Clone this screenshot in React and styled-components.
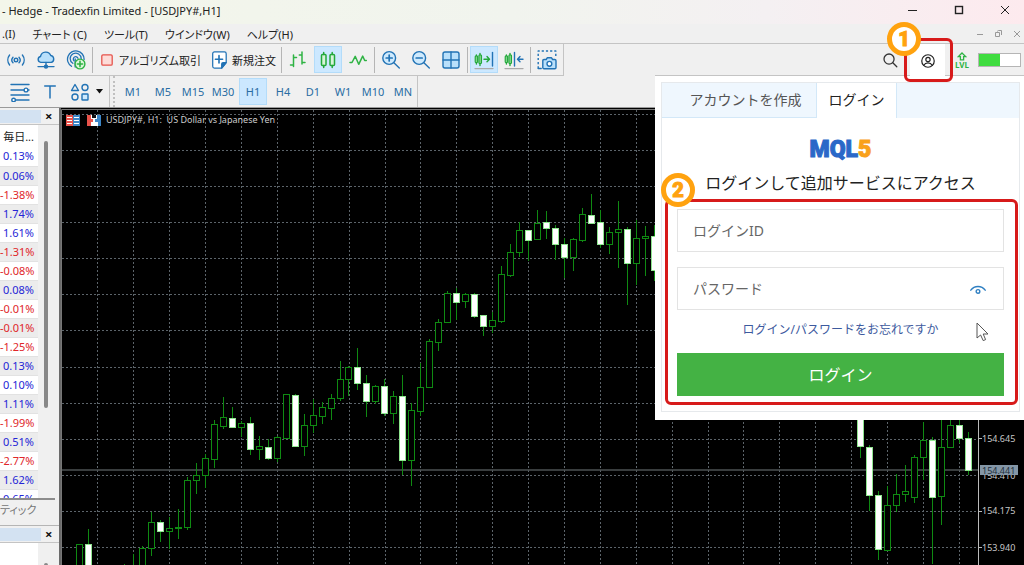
import React, { useState } from "react";
import styled, { createGlobalStyle, css } from "styled-components";

const GlobalStyle = createGlobalStyle`
  * {
    box-sizing: border-box;
  }
  body {
    margin: 0;
    overflow: hidden;
    font-family: "Noto Sans", "Noto Sans CJK JP", sans-serif;
    color: #222;
  }
  button, input {
    font-family: inherit;
  }
`;

// [x, high, body top, body bottom, low, filled]
const candles = [
  [79, 544, 544, 580, 580, 0],
  [88, 529, 544, 580, 580, 1],
  [124, 564, 570, 580, 580, 0],
  [133, 554, 570, 580, 580, 0],
  [142, 546, 548, 580, 580, 0],
  [151, 512, 522, 548, 556, 0],
  [160, 520, 522, 531, 542, 1],
  [169, 517, 528, 531, 549, 0],
  [178, 509, 527, 528, 539, 0],
  [187, 477, 480, 527, 530, 0],
  [196, 463, 475, 480, 494, 0],
  [205, 454, 458, 475, 488, 0],
  [214, 420, 424, 459, 468, 0],
  [223, 397, 417, 426, 429, 0],
  [232, 407, 418, 427, 428, 1],
  [241, 421, 423, 427, 437, 0],
  [250, 417, 423, 449, 455, 1],
  [259, 436, 446, 449, 460, 0],
  [268, 439, 447, 458, 460, 1],
  [277, 436, 437, 458, 462, 0],
  [286, 394, 394, 438, 438, 0],
  [295, 394, 395, 446, 447, 1],
  [304, 414, 425, 446, 456, 0],
  [313, 399, 415, 425, 433, 0],
  [322, 402, 407, 416, 424, 0],
  [331, 394, 398, 408, 420, 0],
  [340, 361, 379, 398, 401, 0],
  [348, 366, 367, 379, 396, 0],
  [357, 348, 367, 383, 390, 1],
  [366, 375, 383, 401, 417, 1],
  [375, 385, 386, 401, 404, 0],
  [384, 379, 386, 413, 416, 1],
  [393, 391, 396, 413, 424, 0],
  [402, 375, 396, 460, 475, 1],
  [411, 403, 410, 460, 486, 0],
  [420, 363, 387, 411, 416, 0],
  [429, 339, 341, 387, 388, 0],
  [438, 319, 322, 342, 351, 0],
  [447, 291, 293, 322, 323, 0],
  [456, 288, 293, 302, 320, 1],
  [465, 293, 294, 301, 308, 0],
  [474, 293, 294, 316, 318, 1],
  [483, 315, 315, 326, 336, 1],
  [492, 312, 320, 326, 333, 0],
  [501, 266, 274, 321, 323, 0],
  [510, 244, 252, 275, 277, 0],
  [519, 222, 230, 252, 257, 0],
  [528, 230, 230, 240, 261, 1],
  [537, 210, 223, 239, 240, 0],
  [546, 211, 222, 228, 239, 1],
  [555, 225, 228, 244, 260, 1],
  [564, 238, 244, 257, 278, 1],
  [573, 238, 239, 257, 271, 0],
  [582, 208, 214, 240, 242, 0],
  [591, 194, 215, 223, 224, 1],
  [600, 210, 222, 244, 248, 1],
  [609, 227, 232, 244, 254, 0],
  [618, 201, 229, 232, 268, 0],
  [627, 227, 229, 263, 305, 1],
  [636, 220, 238, 263, 285, 0],
  [645, 226, 236, 238, 276, 0],
  [654, 225, 236, 270, 281, 1],
  [860, 380, 390, 446, 458, 1],
  [869, 445, 447, 495, 511, 1],
  [878, 491, 495, 549, 560, 1],
  [887, 486, 505, 550, 551, 0],
  [896, 474, 494, 505, 512, 0],
  [905, 465, 491, 494, 502, 0],
  [914, 455, 457, 497, 503, 0],
  [923, 422, 440, 457, 480, 0],
  [932, 437, 440, 497, 564, 1],
  [941, 410, 447, 496, 525, 0],
  [950, 410, 425, 447, 448, 0],
  [959, 418, 425, 438, 443, 1],
  [968, 432, 438, 470, 475, 1],
];

const gridX = Array.from({ length: 25 }, (_, i) => Math.round(97.3 + i * 35.9));
const gridY = Array.from({ length: 13 }, (_, i) => Math.round(113.8 + i * 36.1));

const changes = [
  "0.13%",
  "0.06%",
  "-1.38%",
  "1.74%",
  "1.61%",
  "-1.31%",
  "-0.08%",
  "0.08%",
  "-0.01%",
  "-0.01%",
  "-1.25%",
  "0.13%",
  "0.10%",
  "1.11%",
  "-1.99%",
  "0.51%",
  "-2.77%",
  "1.62%",
  "0.65%",
];

const frames = ["M1", "M5", "M15", "M30", "H1", "H4", "D1", "W1", "M10", "MN"];

const Icon = ({ size = 20, children, ...rest }) => (
  <svg
    width={size}
    height={size}
    viewBox="0 0 20 20"
    fill="none"
    stroke="#2273b5"
    strokeWidth="1.4"
    strokeLinecap="round"
    strokeLinejoin="round"
    {...rest}
  >
    {children}
  </svg>
);

const SignalIcon = () => (
  <Icon>
    <circle cx="10" cy="10" r="1.8" />
    <path d="M7 7.200a4.200 4.200 0 0 0 0 5.600M13 7.200a4.200 4.200 0 0 1 0 5.600M3.600 5a8 8 0 0 0 0 10M16.400 5a8 8 0 0 1 0 10" />
  </Icon>
);

const CloudIcon = () => (
  <Icon>
    <path d="M4.8 12.4a3 3 0 0 1-.3-5.9 5.4 5.4 0 0 1 10.3-1 3.6 3.6 0 0 1 .6 6.9z" fill="#b9e0fb" />
    <path d="M10 12.4v3M2 16.6h6M12 16.6h6" />
    <circle cx="10" cy="16.6" r="1.5" fill="#2273b5" />
  </Icon>
);

const PodcastIcon = () => (
  <Icon>
    <path d="M5.5 16.3a8.3 8.3 0 1 1 12.6-6.9M6.8 13.3a5.5 5.5 0 1 1 8.4-4.5M8 10.8a2.4 2.4 0 1 1 4-2.4" strokeWidth="1.3" />
    <path d="M9.2 9v8" />
    <circle cx="14" cy="14" r="4.9" fill="#dcf6da" stroke="#2fb344" />
    <path d="M14 11.4v5.2M11.4 14h5.2" stroke="#2fb344" strokeWidth="1.6" />
  </Icon>
);

const StopIcon = () => (
  <Icon size={16}>
    <rect x="3.5" y="3.5" width="13" height="13" rx="1.5" fill="#fddcd8" stroke="#e5534b" strokeWidth="1.6" />
  </Icon>
);

const OrderIcon = () => (
  <Icon size={18}>
    <path d="M5 1h11a2 2 0 0 1 2 2v10l-5 6H5a2 2 0 0 1-2-2V3a2 2 0 0 1 2-2z" fill="#fff" />
    <path d="M18 13h-3.5a1.5 1.5 0 0 0-1.5 1.5V19z" fill="#2273b5" />
    <path d="M10 5.2v8M6 9.2h8" strokeWidth="1.8" />
  </Icon>
);

const BarsIcon = () => (
  <Icon stroke="#2fb344" strokeWidth="1.5">
    <path d="M5.5 5v11.5M5.5 7.5H8.5M2.5 15h3M14 2v12M11.3 5H14M14 12.5h3" />
  </Icon>
);

const CandlesIcon = () => (
  <Icon stroke="#22a83a" strokeWidth="1.5">
    <rect x="3.5" y="4.5" width="4.5" height="11" rx="1" fill="#d7f4d9" />
    <rect x="12" y="4.5" width="4.5" height="11" rx="1" fill="#d7f4d9" />
    <path d="M5.7 2.5v2M5.7 15.5v2M14.2 2.5v2M14.2 15.5v2" />
  </Icon>
);

const LineIcon = () => (
  <Icon stroke="#2fb344" strokeWidth="1.5">
    <path d="M2 12.5h2l3.2-6.2 3.5 8 4-8.2 2 4.4h1.6" />
  </Icon>
);

const ZoomIcon = ({ plus }) => (
  <Icon>
    <circle cx="8.2" cy="8" r="6.4" fill="#cfeafd" />
    <path d={plus ? "M5.2 8h6M8.2 5v6" : "M5.2 8h6"} strokeWidth="1.7" />
    <path d="M12.9 12.7l5.4 5.2" />
  </Icon>
);

const TilesIcon = () => (
  <Icon>
    <rect x="2" y="2" width="16" height="16" rx="2" fill="#b9e0fb" />
    <path d="M10 2v16M2 10h16" />
  </Icon>
);

const ScrollIcon = () => (
  <Icon>
    <path d="M2.4 5v9M6 3.5v12" stroke="#22a83a" />
    <rect x="1.2" y="6" width="2.4" height="6.5" rx=".8" fill="#7fd48a" stroke="#22a83a" strokeWidth="1.1" />
    <rect x="4.9" y="5" width="2.6" height="8.5" rx=".8" fill="#7fd48a" stroke="#22a83a" strokeWidth="1.1" />
    <path d="M10 9.2h5.4M13 6.6l2.5 2.6-2.5 2.6" stroke="#22a83a" />
    <path d="M18.5 2.5v13.5" />
    <path d="M1 18.6h18" stroke="#aaa" />
  </Icon>
);

const ShiftIcon = () => (
  <Icon>
    <path d="M2.4 5v9M6 3.5v12" stroke="#22a83a" />
    <rect x="1.2" y="6" width="2.4" height="6.5" rx=".8" fill="#7fd48a" stroke="#22a83a" strokeWidth="1.1" />
    <rect x="4.9" y="5" width="2.6" height="8.5" rx=".8" fill="#7fd48a" stroke="#22a83a" strokeWidth="1.1" />
    <path d="M10.5 2.5v13.5M19 9.2h-5.4M16 6.6l-2.5 2.6 2.5 2.6" />
    <path d="M1 18.6h18" stroke="#aaa" />
  </Icon>
);

const CameraIcon = () => (
  <Icon>
    <path d="M1.2 18.5V1h17.6v5" strokeDasharray="2.2 2" strokeLinecap="butt" />
    <path d="M1.2 18.5h3" />
    <path d="M7 9.5h2.2l1.2-1.8h4l1.2 1.8h2.2a1.2 1.2 0 0 1 1.2 1.2v6.8a1.2 1.2 0 0 1-1.2 1.2H7a1.2 1.2 0 0 1-1.2-1.2v-6.8A1.2 1.2 0 0 1 7 9.5z" fill="#b9e0fb" />
    <circle cx="12.4" cy="13.8" r="2.4" fill="#fff" />
  </Icon>
);

const LevelsIcon = () => (
  <Icon>
    <path d="M1 2.5h18M1 8h13M17.5 8H19M1 13h18M6 18h13" />
    <circle cx="16" cy="8" r="1.9" fill="#fff" />
    <circle cx="3.6" cy="18" r="1.8" fill="#fff" />
  </Icon>
);

const TextIcon = () => (
  <Icon strokeWidth="1.5">
    <path d="M4.2 4h11.6M10 4v12.5" strokeLinecap="butt" />
  </Icon>
);

const ShapesIcon = () => (
  <Icon>
    <path d="M5 2.5l3.5 6h-7z" />
    <circle cx="15" cy="5.5" r="3" />
    <circle cx="5" cy="15" r="3" />
    <rect x="12" y="12" width="6" height="6" rx=".6" fill="#cfeafd" />
  </Icon>
);

const SearchIcon = () => (
  <Icon size={16} stroke="#333" strokeWidth="1.6">
    <circle cx="8.8" cy="8.8" r="6.3" />
    <path d="M13.5 13.5l5 5" />
  </Icon>
);

const AccountIcon = () => (
  <Icon size={16} stroke="#222" strokeWidth="1.5">
    <circle cx="10" cy="10" r="7.800" />
    <circle cx="10" cy="8.200" r="2.700" />
    <path d="M4.800 15.400c1.200-2.200 3-3 5.200-3s4 .8 5.200 3" />
  </Icon>
);

const EyeIcon = () => (
  <Icon size={16} stroke="#2e7fc2" strokeWidth="1.7">
    <path d="M1 11.5c4.500-6.200 13.500-6.200 18 0" />
    <circle cx="10" cy="13" r="2.3" />
  </Icon>
);

const App = () => {
  const [frame, setFrame] = useState("H1");
  const [tab, setTab] = useState("login");
  const [visible, setVisible] = useState(false);
  return (
    <Terminal>
      <GlobalStyle />
      <TitleBar>
        <span>- Hedge - Tradexfin Limited - [USDJPY#,H1]</span>
        <WindowControls $color="#222" $gap={36}>
          <button aria-label="minimize">
            <svg width="10" height="10"><path d="M0 5.500h9" /></svg>
          </button>
          <button aria-label="maximize">
            <svg width="10" height="10"><rect x="1.500" y="1.500" width="7" height="7" strokeWidth="1.400" /></svg>
          </button>
          <button aria-label="close">
            <svg width="10" height="10"><path d="M1 1l8 8M9 1l-8 8" /></svg>
          </button>
        </WindowControls>
      </TitleBar>
      <MenuBar>
        <MenuList>
          <button>.(I)</button>
          <button>チャート (C)</button>
          <button>ツール(T)</button>
          <button>ウインドウ(W)</button>
          <button>ヘルプ(H)</button>
        </MenuList>
        <WindowControls $color="#999" $gap={8}>
          <button aria-label="minimize chart">
            <svg width="10" height="10"><path d="M1 5.500h6" /></svg>
          </button>
          <button aria-label="restore chart">
            <svg width="10" height="10"><path d="M3.500 2.500a1 1 0 0 1 1-1h3v4.500M1.500 3.500h4v4h-4z" /></svg>
          </button>
          <button aria-label="close chart">
            <svg width="10" height="10"><path d="M2 2l6 6M8 2l-6 6" /></svg>
          </button>
        </WindowControls>
      </MenuBar>
      <ToolRow>
        <ToolGroup>
          <ToolButton aria-label="signals"><SignalIcon /></ToolButton>
          <ToolButton aria-label="vps"><CloudIcon /></ToolButton>
          <ToolButton aria-label="add"><PodcastIcon /></ToolButton>
          <Separator />
          <LabelButton><StopIcon />アルゴリズム取引</LabelButton>
          <LabelButton><OrderIcon />新規注文</LabelButton>
          <Separator />
          <ToolButton aria-label="bars"><BarsIcon /></ToolButton>
          <ToolButton aria-label="candles" $active><CandlesIcon /></ToolButton>
          <ToolButton aria-label="line"><LineIcon /></ToolButton>
          <Separator />
          <ToolButton aria-label="zoom in"><ZoomIcon plus /></ToolButton>
          <ToolButton aria-label="zoom out"><ZoomIcon /></ToolButton>
          <ToolButton aria-label="tiles"><TilesIcon /></ToolButton>
          <Separator />
          <ToolButton aria-label="auto scroll" $active><ScrollIcon /></ToolButton>
          <ToolButton aria-label="shift"><ShiftIcon /></ToolButton>
          <Separator />
          <ToolButton aria-label="screenshot"><CameraIcon /></ToolButton>
        </ToolGroup>
        <StatusGroup>
          <ToolButton aria-label="search"><SearchIcon /></ToolButton>
          <AccountTab>
            <AccountButton aria-label="account"><AccountIcon /></AccountButton>
            <AccountMark><Badge>1</Badge></AccountMark>
          </AccountTab>
          <Level>
            <svg width="10" height="9" fill="none" stroke="#2fb344" strokeWidth="1.300">
              <path d="M5 1l3.600 3.600H6.600V7.800H3.400V4.600H1.400z" />
            </svg>
            LVL
          </Level>
          <Battery><i /></Battery>
        </StatusGroup>
        <Popup>
          <PopupFrame>
            <Tabs>
              <Tab $wide $on={tab === "create"} onClick={() => setTab("create")}>
                アカウントを作成
              </Tab>
              <Tab $on={tab === "login"} onClick={() => setTab("login")}>
                ログイン
              </Tab>
            </Tabs>
            <PopupBody>
              <Logo>MQL<b>5</b></Logo>
              <h1>ログインして追加サービスにアクセス</h1>
              <Form onSubmit={(e) => e.preventDefault()}>
                <Field>
                  <input type="text" placeholder="ログインID" aria-label="ログインID" />
                </Field>
                <Field>
                  <input
                    type={visible ? "text" : "password"}
                    placeholder="パスワード"
                    aria-label="パスワード"
                  />
                  <button
                    type="button"
                    aria-label="show password"
                    onClick={() => setVisible(!visible)}
                  >
                    <EyeIcon />
                  </button>
                </Field>
                <a href="#forgot">ログイン/パスワードをお忘れですか</a>
                <Submit type="submit">ログイン</Submit>
                <FormMark><Badge>2</Badge></FormMark>
                <Pointer width="14" height="20" viewBox="0 0 14 20">
                  <path d="M1 1v15l3.600-3 2.600 5.600 2.400-1L7.200 12H12z" fill="#fff" stroke="#555" />
                </Pointer>
              </Form>
            </PopupBody>
          </PopupFrame>
        </Popup>
      </ToolRow>
      <ToolRow $second>
        <FrameGroup>
          <ToolButton aria-label="levels"><LevelsIcon /></ToolButton>
          <ToolButton aria-label="text"><TextIcon /></ToolButton>
          <ToolButton aria-label="shapes"><ShapesIcon /></ToolButton>
          <svg width="8" height="5"><path d="M0 0h7L3.500 4.500z" fill="#111" /></svg>
          <Grip />
          {frames.map((name) => (
            <ToolButton key={name} $active={name === frame} onClick={() => setFrame(name)}>
              {name}
            </ToolButton>
          ))}
        </FrameGroup>
      </ToolRow>
      <Main>
        <Side>
          <PanelHead><i /><button aria-label="close watch">×</button></PanelHead>
          <Watch>
            <table>
              <thead>
                <tr><th scope="col">毎日...</th></tr>
              </thead>
              <tbody>
                {changes.map((value, i) => (
                  <Row key={i} $down={value[0] === "-"}>
                    <td>{value}</td>
                  </Row>
                ))}
              </tbody>
            </table>
            <Thumb />
          </Watch>
          <PanelTab>ティック</PanelTab>
          <PanelHead><i /><button aria-label="close navigator">×</button></PanelHead>
          <Navigator><Thumb /></Navigator>
        </Side>
        <Chart>
          <svg
            width="100%"
            height="100%"
            viewBox="61 109 963 456"
            preserveAspectRatio="xMinYMin slice"
          >
            <g stroke="#5c646a" strokeDasharray="2 2" shapeRendering="crispEdges">
              {gridX.map((x) => (
                <path key={x} d={`M${x + 0.5} 110V565`} />
              ))}
              {gridY.map((y) => (
                <path key={y} d={`M62 ${y + 0.5}H978`} />
              ))}
            </g>
            <path d="M61.500 565V109.500H1024" stroke="#777" fill="none" />
            <path d="M62 470H978" stroke="#4c5253" strokeWidth="1.500" />
            <g stroke="#0f8a12" shapeRendering="crispEdges">
              {candles.map(([x, high, top, bottom, low, filled]) => (
                <g key={x}>
                  <path d={`M${x + 0.5} ${high}V${low}`} />
                  <rect
                    x={x - 2.5}
                    y={top + 0.5}
                    width="6"
                    height={bottom - top}
                    fill={filled ? "#fff" : "#000"}
                    stroke={filled ? "#8fe58f" : "#0f8a12"}
                  />
                </g>
              ))}
            </g>
            <path d="M978.500 109V565M978 438.500h4M978 511.500h4M978 547.500h4" stroke="#bbb" />
            <Prices>
              <text x="982" y="442">154.645</text>
              <text x="982" y="479">154.410</text>
              <text x="982" y="514">154.175</text>
              <text x="982" y="551">153.940</text>
              <rect x="980" y="465" width="38" height="10" fill="#8496a6" />
              <text x="982" y="474" className="now">154.441</text>
            </Prices>
          </svg>
          <ChartTitle>
            <svg width="14" height="11">
              <path d="M0 0h7v11H0z" fill="#e8524a" />
              <path d="M7 0h7v11H7z" fill="#3d86c6" />
              <path d="M1 2.500h5M8 2.500h5M1 5.500h5M8 5.500h5M1 8.500h5M8 8.500h5" stroke="#fff" />
            </svg>
            <svg width="14" height="11">
              <path d="M0 0h14v11H0z" fill="#fff" />
              <path d="M0 0h4v4h2v3H4v4H0z" fill="#e8524a" />
              <path d="M10 0h4v11h-3V7H8V4h2z" fill="#3d86c6" />
              <path d="M5 0h4v3H5z" fill="#111" />
            </svg>
            <span>USDJPY#, H1:&nbsp; US Dollar vs Japanese Yen</span>
          </ChartTitle>
        </Chart>
      </Main>
    </Terminal>
  );
};

const plain = css`
  border: 0;
  padding: 0;
  background: none;
  color: inherit;
`;

const Terminal = styled.div`
  display: flex;
  flex-direction: column;
  height: 100vh;
  background: #f0f0f0;
  font-size: 11px;
  overflow: hidden;
`;

const TitleBar = styled.header`
  display: flex;
  align-items: center;
  justify-content: space-between;
  height: 24px;
  padding: 0 14px 4px 2px;
  background: linear-gradient(90deg, #f3f6ea, #f1f4ee 50%, #f4f0f2 75%, #fdeaee);
`;

const WindowControls = styled.div`
  display: flex;
  align-items: center;
  gap: ${({ $gap }) => $gap}px;
  button {
    ${plain}
    display: flex;
  }
  svg {
    fill: none;
    stroke: ${({ $color }) => $color};
  }
`;

const MenuBar = styled.div`
  display: flex;
  align-items: center;
  justify-content: space-between;
  height: 19px;
  padding: 0 2px;
`;

const MenuList = styled.nav`
  display: flex;
  gap: 17px;
  button {
    ${plain}
    font-size: 11px;
    font-feature-settings: "palt";
  }
`;

const ToolRow = styled.div`
  position: relative;
  display: flex;
  justify-content: space-between;
  height: ${({ $second }) => ($second ? 32 : 33)}px;
  border-top: ${({ $second }) => ($second ? 0 : "1px solid #c4c4c4")};
  border-bottom: ${({ $second }) => ($second ? "1px solid #9a9a9a" : 0)};
`;

const ToolGroup = styled.div`
  display: flex;
  align-items: center;
  gap: 2px;
  padding: 0 2px;
  border-right: 1px solid #c4c4c4;
  border-bottom: 1px solid #c4c4c4;
`;

const FrameGroup = styled(ToolGroup)`
  padding: 0 0 0 6px;
  border-bottom: 0;
`;

const ToolButton = styled.button`
  ${plain}
  display: flex;
  align-items: center;
  justify-content: center;
  width: 28px;
  height: 27px;
  border: 1px solid ${({ $active }) => ($active ? "#b3dcfa" : "transparent")};
  background: ${({ $active }) => ($active ? "#cce8ff" : "none")};
  color: #2a6da3;
  font-size: 11px;
`;

const LabelButton = styled.button`
  ${plain}
  display: flex;
  align-items: center;
  gap: 4px;
  padding: 0 3px 0 4px;
  font-size: 11px;
  font-feature-settings: "palt";
  white-space: nowrap;
`;

const Separator = styled.span`
  width: 1px;
  height: 26px;
  background: #b5b5b5;
`;

const Grip = styled.span`
  width: 6px;
  height: 100%;
  margin: 0 2px 0 3px;
  border-left: 1px solid #c4c4c4;
  border-right: 2px dotted #c0c0c0;
`;

const StatusGroup = styled.div`
  display: flex;
  align-items: center;
  padding-right: 3px;
`;

const AccountTab = styled.div`
  position: relative;
  z-index: 2;
  align-self: stretch;
  display: flex;
  margin: 0 8px 0 6px;
`;

const AccountButton = styled.button`
  ${plain}
  display: flex;
  align-items: center;
  justify-content: center;
  width: 35px;
  height: 33px;
  background: #fff;
`;

const mark = css`
  position: absolute;
  border: 3px solid #d71a1a;
  border-radius: 6px;
  pointer-events: none;
`;

const AccountMark = styled.div`
  ${mark}
  inset: -6px -8px -6px -6px;
`;

const Badge = styled.span`
  position: absolute;
  top: -19px;
  left: -20px;
  display: flex;
  align-items: center;
  justify-content: center;
  width: 34px;
  height: 34px;
  border: 5px solid #ffa20f;
  border-radius: 50%;
  background: #fff;
  color: #ffa20f;
  font: 900 20px Roboto, sans-serif;
  -webkit-text-stroke: 1px #ffa20f;
`;

const Level = styled.div`
  display: flex;
  flex-direction: column;
  align-items: center;
  margin: 0 9px 0 2px;
  color: #2fb344;
  font-size: 8px;
  font-weight: 700;
  line-height: 8px;
`;

const Battery = styled.div`
  width: 43px;
  height: 14px;
  border: 1px solid #b5b5b5;
  background: #fff;
  i {
    display: block;
    width: 50%;
    height: 100%;
    background: #3fdc3f;
  }
`;

const Popup = styled.section`
  position: absolute;
  z-index: 1;
  top: 31px;
  right: 0;
  width: 369px;
  padding: 6px 4px 8px 6px;
  border-top: 1px solid #c4c4c4;
  background: #fff;
`;

const PopupFrame = styled.div`
  border: 1px solid #e6e9ec;
`;

const Tabs = styled.div`
  display: flex;
  background: #eff7fe;
`;

const Tab = styled.button`
  ${plain}
  width: ${({ $wide }) => ($wide ? 155 : 79)}px;
  padding: 0 0 2px ${({ $wide }) => ($wide ? 12 : 0)}px;
  height: 35px;
  border-bottom: 1px solid ${({ $on }) => ($on ? "#fff" : "#d3e8f8")};
  background: ${({ $on }) => ($on ? "#fff" : "none")};
  box-shadow: ${({ $on }) => ($on ? "0 0 0 1px #d3e8f8" : "none")};
  clip-path: inset(0 -1px 0 -1px);
  color: ${({ $on }) => ($on ? "#222" : "#555")};
  font-size: 14px;
`;

const PopupBody = styled.div`
  display: flex;
  flex-direction: column;
  align-items: center;
  padding: 20px 15px 15px;
  h1 {
    margin: 9px 0 14px;
    font-size: 16px;
    font-weight: 400;
    line-height: 24px;
  }
`;

const Logo = styled.div`
  color: #2a68c8;
  font: 900 23px/24px Roboto, sans-serif;
  -webkit-text-stroke: 1px #2a68c8;
  b {
    color: #f9a11b;
    font-weight: 900;
    -webkit-text-stroke: 1px #f9a11b;
  }
`;

const Form = styled.form`
  position: relative;
  display: flex;
  flex-direction: column;
  width: 100%;
  a {
    margin: -5px auto 13px;
    color: #3d5a9e;
    font-size: 12px;
    line-height: 20px;
    text-decoration: none;
  }
`;

const Field = styled.div`
  display: flex;
  align-items: center;
  height: 43px;
  margin-bottom: 15px;
  padding: 0 17px 0 15px;
  border: 1px solid #e3e3e3;
  input {
    flex: 1;
    min-width: 0;
    padding: 0;
    border: 0;
    outline: 0;
    font-size: 14px;
  }
  input::placeholder {
    color: #666;
  }
  button {
    ${plain}
    display: flex;
  }
`;

const Submit = styled.button`
  ${plain}
  height: 43px;
  padding-bottom: 2px;
  background: #44b244;
  color: #fff;
  font-size: 16px;
`;

const FormMark = styled.div`
  ${mark}
  inset: -10px -14px -9px -12px;
  ${Badge} {
    top: -29px;
    left: -7px;
  }
`;

const Pointer = styled.svg`
  position: absolute;
  right: 14px;
  bottom: 54px;
`;

const Main = styled.main`
  display: flex;
  flex: 1;
  min-height: 0;
`;

const Side = styled.aside`
  display: flex;
  flex-direction: column;
  width: 61px;
  border-right: 2px solid #6a6a6a;
  overflow: hidden;
`;

const PanelHead = styled.div`
  display: flex;
  align-items: center;
  gap: 4px;
  height: 17px;
  border-bottom: 1px solid #c4c4c4;
  i {
    width: 41px;
    height: 13px;
    background: #d3e2f2;
  }
  button {
    ${plain}
    color: #111;
    font-size: 13px;
    font-weight: 700;
    line-height: 13px;
  }
`;

const Watch = styled.div`
  position: relative;
  height: 375px;
  margin-right: 4px;
  border-bottom: 2px solid #8c8c8c;
  overflow: hidden;
  table {
    width: 38px;
    border-collapse: collapse;
    table-layout: fixed;
    background: #fff;
  }
  th {
    height: 22px;
    padding: 0 4px 0 0;
    font-size: 11px;
    font-weight: 400;
    text-align: right;
    white-space: nowrap;
  }
`;

const Row = styled.tr`
  td {
    height: 19px;
    padding: 0 4px 0 0;
    border-bottom: 1px solid #e2e2e2;
    color: ${({ $down }) => ($down ? "#e0262a" : "#2525d6")};
    direction: rtl;
    line-height: 18px;
    text-align: right;
    unicode-bidi: plaintext;
  }
  &:nth-child(even) {
    background: #ececec;
  }
`;

const Thumb = styled.span`
  position: absolute;
  top: 16px;
  left: 44px;
  width: 4px;
  height: 267px;
  border-radius: 2px;
  background: #888;
`;

const PanelTab = styled.div`
  height: 26px;
  border-bottom: 1px solid #b5b5b5;
  color: #777;
  font-size: 11px;
  font-feature-settings: "palt";
  line-height: 19px;
  white-space: nowrap;
`;

const Navigator = styled.div`
  position: relative;
  flex: 1;
  margin-right: 21px;
  background: #fff;
  ${Thumb} {
    top: 20px;
    height: 40px;
  }
`;

const Chart = styled.section`
  position: relative;
  flex: 1;
  min-width: 0;
  padding-top: 1px;
  background: #000;
  overflow: hidden;
  > svg {
    display: block;
  }
`;

const ChartTitle = styled.div`
  position: absolute;
  top: 6px;
  left: 5px;
  display: flex;
  align-items: center;
  gap: 7px;
  color: #ccc;
  font-size: 9px;
  line-height: 12px;
  span {
    margin-left: -2px;
  }
`;

const Prices = styled.g`
  fill: #c8c8c8;
  font-size: 9px;
  .now {
    fill: #22303c;
  }
`;

export default App;
